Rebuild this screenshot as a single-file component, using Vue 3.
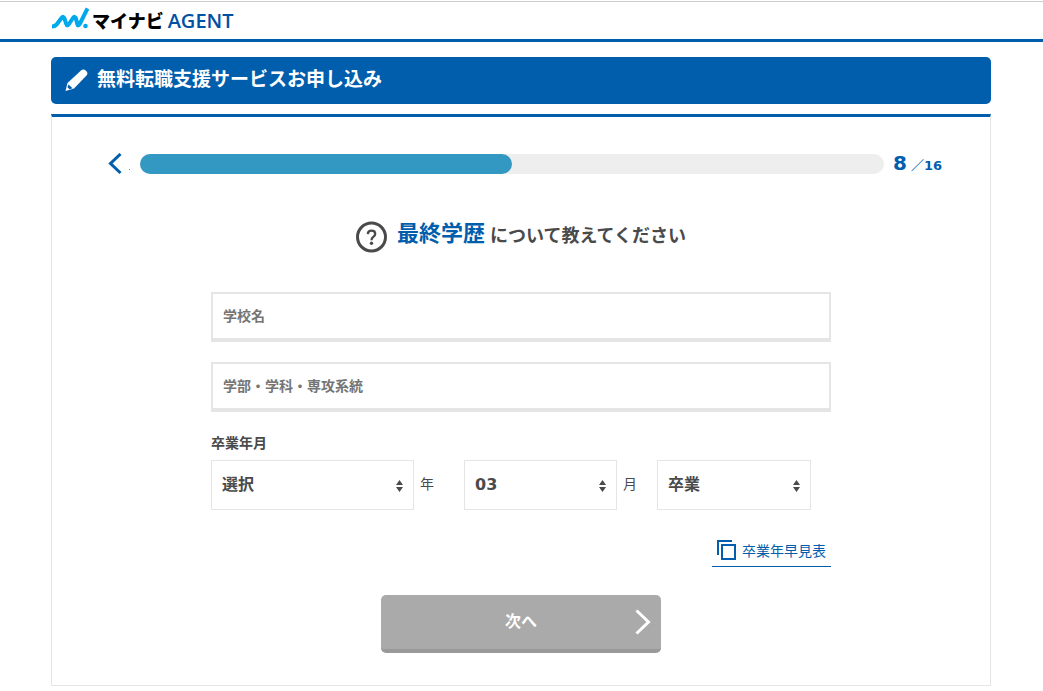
<script setup>
import { computed, ref } from 'vue'

const step = ref(8)
const total = 16
const progress = computed(() => `${(step.value / total) * 100}%`)

const school = ref('')
const department = ref('')
const year = ref('選択')
const month = ref('03')
const status = ref('卒業')

const years = ['選択', '2018', '2019', '2020', '2021', '2022']
const months = ['01', '02', '03', '04', '05', '06', '07', '08', '09', '10', '11', '12']
const statuses = ['卒業', '卒業見込', '中退']
</script>

<template>
  <div class="page">
    <header class="site-header">
      <a class="brand" href="#" aria-label="マイナビ AGENT">
        <svg class="brand-mark" width="38" height="24" viewBox="0 0 38 24" aria-hidden="true">
          <path d="M1 20.500Q4 20.500 6 18L10.500 12Q12.500 9.500 13.500 12.500L15.200 18Q16.200 21 18 18L22 12Q24 9.500 25 12.500L26.200 18Q27 21 29 17.500L36.500 2.500" fill="none" stroke="#00a9ec" stroke-width="4" stroke-linejoin="round" />
          <circle cx="34.500" cy="20" r="2.300" fill="#00a9ec" />
        </svg>
        <span class="brand-name">マイナビ</span>
        <span class="brand-sub">AGENT</span>
      </a>
    </header>

    <main class="content">
      <h1 class="title">
        <svg width="24" height="24" viewBox="0 0 24 24" aria-hidden="true">
          <path d="M2.500 14L16 1.500Q18.500 -0.500 21 1.800Q23.500 4.300 21.500 6.500L9 19.500L0.500 22Z" fill="#fff" />
          <path d="M3.500 15.500L7.500 19.200L4.500 20.200L2.500 18.300Z" fill="#005ead" />
        </svg>
        <span>無料転職支援サービスお申し込み</span>
      </h1>

      <section class="card">
        <div class="progress-row">
          <button class="back" type="button" aria-label="戻る">
            <svg width="14" height="22" viewBox="0 0 14 22" aria-hidden="true">
              <path d="M12.500 1L2.500 10.500L12.500 20" fill="none" stroke="#005ead" stroke-width="3" />
            </svg>
            <span class="back-dot"></span>
          </button>
          <div class="track"><div class="bar" :style="{ width: progress }"></div></div>
          <p class="count"><strong>{{ step }}</strong><span>／{{ total }}</span></p>
        </div>

        <h2 class="question">
          <svg width="32" height="32" viewBox="0 0 32 32" aria-hidden="true">
            <circle cx="15.500" cy="16" r="14" fill="none" stroke="#4a4a4a" stroke-width="3" />
            <path d="M11.800 13.100Q12 9.700 15.600 9.700Q19.200 9.700 19.200 12.900Q19.200 14.800 17.200 15.900Q15.500 16.900 15.500 19.300" fill="none" stroke="#4a4a4a" stroke-width="2.300" />
            <circle cx="15.500" cy="22.300" r="1.700" fill="#4a4a4a" />
          </svg>
          <em>最終学歴</em>
          <span>について教えてください</span>
        </h2>

        <form class="form" @submit.prevent>
          <input v-model="school" class="text" type="text" placeholder="学校名" aria-label="学校名">
          <input v-model="department" class="text" type="text" placeholder="学部・学科・専攻系統" aria-label="学部・学科・専攻系統">

          <label class="field-label" for="year">卒業年月</label>
          <div class="selects">
            <div class="select year">
              <select id="year" v-model="year">
                <option v-for="y in years" :key="y">{{ y }}</option>
              </select>
              <svg width="7" height="12" viewBox="0 0 7 12" aria-hidden="true"><path d="M0 5L3.500 0L7 5ZM0 7L3.500 12L7 7Z" fill="#4a4a4a" /></svg>
            </div>
            <label class="unit year-unit" for="year">年</label>
            <div class="select month">
              <select id="month" v-model="month">
                <option v-for="m in months" :key="m">{{ m }}</option>
              </select>
              <svg width="7" height="12" viewBox="0 0 7 12" aria-hidden="true"><path d="M0 5L3.500 0L7 5ZM0 7L3.500 12L7 7Z" fill="#4a4a4a" /></svg>
            </div>
            <label class="unit month-unit" for="month">月</label>
            <div class="select status">
              <select v-model="status" aria-label="卒業区分">
                <option v-for="s in statuses" :key="s">{{ s }}</option>
              </select>
              <svg width="7" height="12" viewBox="0 0 7 12" aria-hidden="true"><path d="M0 5L3.500 0L7 5ZM0 7L3.500 12L7 7Z" fill="#4a4a4a" /></svg>
            </div>
          </div>

          <a class="chart-link" href="#">
            <svg width="20" height="20" viewBox="0 0 20 20" aria-hidden="true">
              <path d="M1 15V1H15" fill="none" stroke="#005ead" stroke-width="2" />
              <rect x="5" y="5" width="13" height="14" fill="none" stroke="#005ead" stroke-width="2" />
            </svg>
            <span>卒業年早見表</span>
          </a>

          <button class="next" type="submit">
            <span>次へ</span>
            <svg width="16" height="26" viewBox="0 0 16 26" aria-hidden="true">
              <path d="M1.500 1.500L13.500 13L1.500 24.500" fill="none" stroke="#fff" stroke-width="3" />
            </svg>
          </button>
        </form>
      </section>
    </main>
  </div>
</template>

<style>
body {
  margin: 0;
  background: #fff;
}
</style>

<style scoped>
.page,
.page * {
  box-sizing: border-box;
}

.page {
  padding-top: 1px;
  color: #4a4a4a;
  font-family: "Noto Sans CJK JP", sans-serif;
}

.site-header {
  height: 41px;
  padding: 0 52px 0 51px;
  border-top: 1px solid #ccc;
  border-bottom: 3px solid #005ead;
}

.brand {
  display: inline-flex;
  align-items: center;
  height: 36px;
  text-decoration: none;
  white-space: nowrap;
}

.brand-mark {
  margin: 0 3px 4px 0;
}

.brand-name {
  color: #000;
  font: 900 18px/36px "Noto Sans CJK JP", sans-serif;
}

.brand-sub {
  margin-left: 4px;
  padding-top: 2px;
  color: #0050a5;
  font: 600 20px/36px "Open Sans", sans-serif;
}

.content {
  padding: 15px 52px 5px 51px;
}

.title {
  display: flex;
  align-items: center;
  gap: 8px;
  height: 47px;
  margin: 0 0 10px;
  padding-left: 14px;
  border-radius: 5px;
  background: #005ead;
  color: #fff;
  font: 700 19px/42px "Noto Sans CJK JP", sans-serif;
}

.title span {
  height: 47px;
}

.card {
  padding: 37px 48px 32px 56px;
  border: 1px solid #e5e5e5;
  border-top: 3px solid #005ead;
}

.progress-row {
  display: flex;
  align-items: center;
  height: 20px;
}

.back {
  display: flex;
  align-items: center;
  width: 32px;
  padding: 0;
  border: 0;
  background: none;
}

.back-dot {
  width: 1px;
  height: 1px;
  margin: 10px 0 0 7px;
  background: #888;
}

.track {
  flex: 1;
  height: 20px;
  border-radius: 10px;
  background: #eee;
}

.bar {
  height: 20px;
  border-radius: 10px;
  background: #3399c2;
}

.count {
  display: flex;
  align-items: baseline;
  gap: 4px;
  width: 58px;
  margin: 0;
  padding-left: 9px;
  color: #005ead;
  font: 700 13px/20px "DejaVu Sans", "Noto Sans CJK JP", sans-serif;
  white-space: nowrap;
}

.count strong {
  font-size: 20px;
}

.question {
  display: flex;
  align-items: center;
  justify-content: center;
  height: 36px;
  margin: 42px 8px 0 0;
  font: 700 18px/36px "Noto Sans CJK JP", sans-serif;
}

.question svg {
  margin: 5px 9px 0 0;
}

.question em {
  margin: 0 5px 6px 0;
  color: #005ead;
  font-size: 22px;
  font-style: normal;
}

.form {
  display: flex;
  flex-direction: column;
  max-width: 628px;
  margin: 40px auto 0;
  padding-right: 8px;
}

.text {
  width: 100%;
  height: 50px;
  margin-bottom: 20px;
  padding: 0 10px 3px;
  border: 2px solid #e5e5e5;
  border-bottom-width: 4px;
  background: #fff;
  color: #4a4a4a;
  font: 700 14px/20px "Noto Sans CJK JP", sans-serif;
}

.text::placeholder {
  color: #757575;
}

.field-label {
  height: 20px;
  margin-bottom: 8px;
  font: 700 14px/20px "Noto Sans CJK JP", sans-serif;
}

.selects {
  display: flex;
}

.select {
  position: relative;
}

.select.year {
  width: 203px;
}

.select.month {
  width: 153px;
}

.select.status {
  width: 154px;
}

.select select {
  width: 100%;
  height: 50px;
  padding: 0 24px 1px 10px;
  border: 1px solid #e5e5e5;
  border-radius: 0;
  appearance: none;
  background: #fff;
  color: #4a4a4a;
  font: 700 16px/24px "DejaVu Sans", "Noto Sans CJK JP", sans-serif;
}

.select svg {
  position: absolute;
  top: 20px;
  right: 11px;
  pointer-events: none;
}

.unit {
  padding-left: 6px;
  font: 400 14px/46px "Noto Sans CJK JP", sans-serif;
}

.year-unit {
  width: 50px;
}

.month-unit {
  width: 40px;
}

.chart-link {
  display: flex;
  align-items: center;
  align-self: flex-end;
  gap: 5px;
  height: 33px;
  margin: 24px 0 28px;
  padding: 0 5px;
  border-bottom: 1px solid #005ead;
  color: #005ead;
  font: 400 14px/20px "Noto Sans CJK JP", sans-serif;
  text-decoration: none;
}

.next {
  position: relative;
  align-self: center;
  width: 280px;
  height: 58px;
  padding: 0 0 4px;
  border: 0;
  border-bottom: 4px solid #999;
  border-radius: 5px;
  background: #aaa;
  color: #fff;
  font: 700 16px/24px "Noto Sans CJK JP", sans-serif;
}

.next svg {
  position: absolute;
  top: 14px;
  right: 10px;
}
</style>
